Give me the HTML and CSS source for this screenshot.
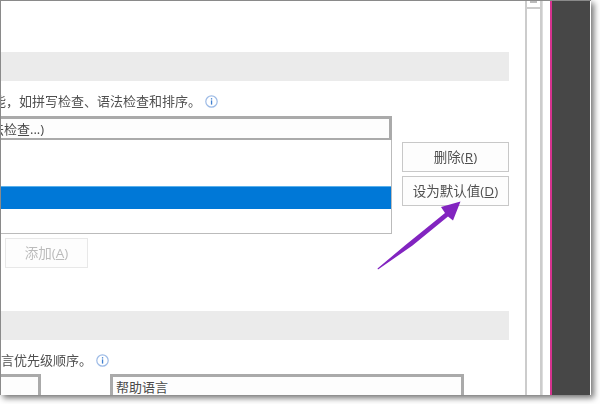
FILE: index.html
```html
<!DOCTYPE html>
<html lang="zh-CN">
<head>
<meta charset="utf-8">
<title>语言</title>
<link rel="stylesheet" href="styles.css">
</head>
<body>
<div class="window">
  <div class="main">
    <div class="content">
      <div class="band"></div>
      <div class="desc">
        <span class="desc-text first">语言功能，如拼写检查、语法检查和排序。</span>
        <svg class="info" viewBox="0 0 13 13"><circle cx="6.5" cy="6.5" r="5.7"/><rect x="5.9" y="5.4" width="1.3" height="4.2"/><rect x="5.9" y="3.2" width="1.3" height="1.3"/></svg>
      </div>
      <div class="editor">
        <div class="left">
          <div class="drop"><span class="drop-text">语法检查...)</span></div>
          <div class="list"><div class="selected"></div></div>
          <div class="add">添加(<u>A</u>)</div>
        </div>
        <div class="right">
          <div class="btn">删除(<u>R</u>)</div>
          <div class="btn tall">设为默认值(<u>D</u>)</div>
        </div>
      </div>
      <div class="band second"></div>
      <div class="desc">
        <span class="desc-text last">语言优先级顺序。</span>
        <svg class="info" viewBox="0 0 13 13"><circle cx="6.5" cy="6.5" r="5.7"/><rect x="5.9" y="5.4" width="1.3" height="4.2"/><rect x="5.9" y="3.2" width="1.3" height="1.3"/></svg>
      </div>
      <div class="boxes">
        <div class="box narrow"></div>
        <div class="box wide">帮助语言</div>
      </div>
    </div>
  </div>
  <div class="scrollbar"><div class="thumb"><i class="grip"></i></div></div>
  <div class="gutter"></div>
  <div class="dark"></div>
  <svg class="arrow" viewBox="0 0 600 404"><polygon points="378,269.500 377.500,268.500 405.500,245 445,213 441,207 460.500,201.500 453,220.500 448,216.500 412.500,245.500"/></svg>
</div>
</body>
</html>
```
FILE: styles.css
```css
* { box-sizing: border-box; }
html, body { margin: 0; height: 100%; background: #fff; overflow: hidden; }
body { font-family: "Open Sans", "Noto Sans CJK SC", sans-serif; font-size: 13px; color: #505050; }

.window {
  position: relative;
  display: flex;
  width: 591px;
  height: 395px;
  background: #fff;
  border-top: 1px solid #8a8a8a;
  border-left: 1px solid #8a8a8a;
  box-shadow: 3px 3px 6px rgba(0, 0, 0, .55);
  filter: blur(.5px);
}

.main { flex: 0 0 524px; height: 394px; padding-top: 51px; overflow: hidden; }
.content { width: 608px; margin-left: -100px; }

.band { height: 29px; background: #ebebeb; }
.band.second { margin-top: 43px; }

.desc { display: flex; align-items: center; height: 20px; margin-top: 10px; padding-left: 100px; white-space: nowrap; }
.desc-text { line-height: 20px; }
.desc-text.first { margin-left: -47px; }
.desc-text.last { margin-left: -13px; }
.info { flex: none; width: 13px; height: 13px; margin-left: 4px; }
.info circle { fill: #fff; stroke: #9dbbe6; stroke-width: 1.2; }
.info rect { fill: #3f7fcf; }

.editor { display: flex; margin-top: 5px; }
.left { flex: 0 0 491px; }
.right { flex: 0 0 107px; margin-left: 10px; padding-top: 26px; }

.drop { height: 24px; padding-left: 74px; background: #fdfdfd; border: 3px solid #aaa; border-bottom-width: 2px; line-height: 20px; white-space: nowrap; overflow: hidden; }
.drop-text { color: #4a4a4a; }

.list { height: 94px; padding-top: 46px; background: #fff; border-right: 1px solid #bbb; border-bottom: 1px solid #bbb; }
.selected { height: 23px; background: #0078d7; border-top: 1px solid #5ab0ea; }

.add { width: 83px; height: 30px; margin: 4px 0 0 104px; border: 1px solid #e8e8e8; color: #bbb; font-size: 13.5px; line-height: 28px; text-align: center; background: #fdfdfd; }

.btn { height: 30px; border: 1px solid #c8c8c8; background: #fdfdfd; font-size: 13.5px; line-height: 28px; text-align: center; white-space: nowrap; }
.btn.tall { margin-top: 4px; }

.boxes { display: flex; gap: 69px; margin-top: 4px; }
.box { height: 80px; background: #fdfdfd; border: 3px solid #aaa; }
.box.narrow { flex: 0 0 140px; }
.box.wide { flex: 0 0 354px; padding-left: 3px; color: #4a4a4a; line-height: 20px; }

.scrollbar { flex: 0 0 17px; height: 394px; border-left: 2px solid #ccc; border-right: 2px solid #ccc; }
.thumb { display: flex; justify-content: center; height: 8px; border-bottom: 2px solid #ccc; }
.grip { display: block; width: 7px; height: 2px; background: #bbb; }

.gutter { flex: 0 0 8px; height: 394px; border-left: 1px solid #ddd; }

.dark { flex: 0 0 40px; height: 394px; background: #474747; border-left: 2px solid #d6338f; }

.arrow { position: absolute; left: -1px; top: -1px; width: 600px; height: 404px; pointer-events: none; }
.arrow polygon { fill: #8224c0; }
```
